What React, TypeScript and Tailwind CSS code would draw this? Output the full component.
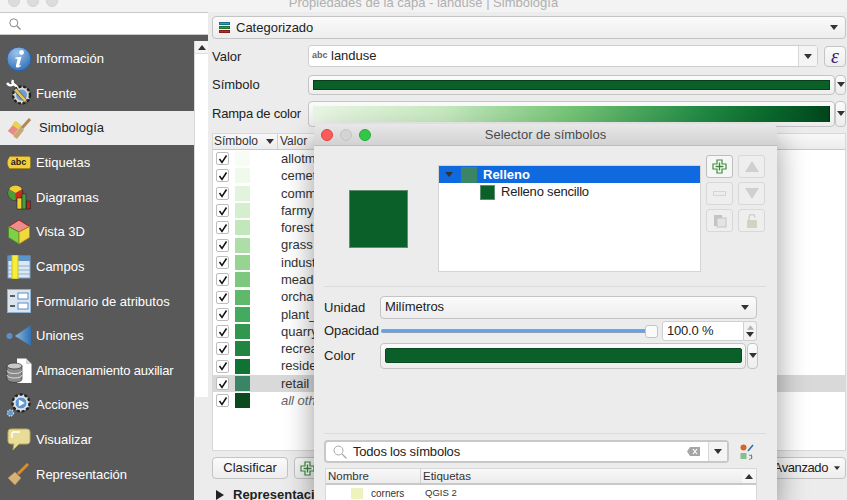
import React from "react";

const Caret = ({ className = "" }: { className?: string }) => (
  <svg width="8" height="5" viewBox="0 0 8 5" className={className}><path d="M0 0h8L4 5z" fill="#333" /></svg>
);

const Light = ({ color, border }: { color: string; border: string }) => (
  <span className="block w-[12px] h-[12px] rounded-full border" style={{ backgroundColor: color, borderColor: border }} />
);

const IconInfo = () => (
  <svg width="26" height="26" viewBox="0 0 26 26">
    <defs><radialGradient id="ig" cx="40%" cy="25%" r="80%"><stop offset="0" stopColor="#9cc3ec" /><stop offset="1" stopColor="#2f6db5" /></radialGradient></defs>
    <circle cx="13" cy="13" r="12" fill="url(#ig)" stroke="#2a5f9e" />
    <circle cx="15.5" cy="6.5" r="2.4" fill="#fff" />
    <path d="M9.5 11.5l6-.8-2.4 9 1.8-.6-.3 1.4c-3 1.6-5.2 1.3-4.6-1l1.6-6.7-2.3.2z" fill="#fff" />
  </svg>
);
const IconFuente = () => (
  <svg width="26" height="28" viewBox="0 0 26 28">
    <path d="M1 4c2 3 5 3 6 1M7 1c-1 2 0 4 2 5l4 4" stroke="#fff" strokeWidth="2.4" fill="none" />
    <circle cx="15.5" cy="16" r="8.5" fill="#d8d8d8" stroke="#222" strokeWidth="2.4" strokeDasharray="3 1.6" />
    <circle cx="15.5" cy="16" r="5.5" fill="#6f9ecb" />
    <path d="M10 9l11 12-2.5 2.2L8 11.5z" fill="#e9c65a" stroke="#444" strokeWidth=".7" />
  </svg>
);
const IconSimbologia = () => (
  <svg width="26" height="24" viewBox="0 0 26 24">
    <path d="M2 15L10 5l7 6-8 9z" fill="#d9c08c" />
    <path d="M2 15l5-6 5 4-5 6z" fill="#e78a88" />
    <path d="M6 9l3-4 6 4-3 4z" fill="#e9d44f" />
    <path d="M7 20l8-9 3 3-7 9z" fill="#c9a878" />
    <path d="M16 12l8-9" stroke="#b08a54" strokeWidth="3" />
  </svg>
);
const IconAbc = () => (
  <div className="relative w-[24px] h-[13px] bg-[#f2cf3a] border border-[#a98a14] rounded-r-[2px] flex items-center justify-center text-[9px] leading-none font-bold text-[#222]" style={{ clipPath: "polygon(14% 0, 100% 0, 100% 100%, 14% 100%, 0 50%)" }}>
    abc
  </div>
);
const IconDiagramas = () => (
  <svg width="24" height="26" viewBox="0 0 24 26">
    <circle cx="8.5" cy="9" r="7.5" fill="#cc2a20" stroke="#222" strokeWidth=".7" />
    <path d="M8.5 9L2 5.2A7.5 7.5 0 0 1 15 5.2z" fill="#f1cf2f" />
    <path d="M8.5 9v7.5A7.5 7.5 0 0 1 1 9c0-1.400.4-2.700 1-3.800z" fill="#4a9e3a" />
    <rect x="10" y="14" width="5" height="11" fill="#f1cf2f" stroke="#222" strokeWidth=".6" />
    <rect x="15" y="10" width="4" height="15" fill="#4a9e3a" stroke="#222" strokeWidth=".6" />
    <rect x="19.500" y="17" width="4" height="8" fill="#b5261c" stroke="#222" strokeWidth=".6" />
  </svg>
);
const IconCube = () => (
  <svg width="24" height="26" viewBox="0 0 24 26">
    <path d="M12 1l10.500 6.500L12 13 1.500 7.500z" fill="#f08b8b" stroke="#a81f1f" />
    <path d="M1.500 7.500L12 13v12L1.500 18.500z" fill="#7fcf4a" stroke="#4d8a2a" />
    <path d="M22.500 7.500L12 13v12l10.500-6.500z" fill="#f1d83f" stroke="#a38f1c" />
  </svg>
);
const IconCampos = () => (
  <svg width="24" height="24" viewBox="0 0 24 24">
    <rect x="1" y="1" width="22" height="22" fill="#dbe7f3" stroke="#7aa3cb" />
    <rect x="1" y="1" width="22" height="5" fill="#5b93cb" />
    <path d="M1 11h22M1 15h22M1 19h22M8 6v17" stroke="#8db0d3" />
    <rect x="5" y="0" width="6" height="24" fill="#f5ee3e" stroke="#c9bf22" />
  </svg>
);
const IconForm = () => (
  <svg width="24" height="24" viewBox="0 0 24 24">
    <rect x=".5" y=".5" width="23" height="23" fill="#dbe5ef" stroke="#8fb0d0" />
    <rect x="11" y="4" width="10" height="6" fill="#fff" stroke="#5b8fc4" />
    <rect x="11" y="14" width="10" height="6" fill="#fff" stroke="#5b8fc4" />
    <path d="M3 7h5M3 17h5" stroke="#333" strokeWidth="1.500" />
  </svg>
);
const IconUniones = () => (
  <svg width="26" height="24" viewBox="0 0 26 24">
    <circle cx="3.500" cy="12" r="3" fill="#5b8fc9" />
    <defs><linearGradient id="ug" x1="0" x2="1"><stop offset="0" stopColor="#8db6de" /><stop offset="1" stopColor="#2f70b0" /></linearGradient></defs>
    <path d="M9 12L25 1v21z" fill="url(#ug)" />
  </svg>
);
const IconStorage = () => (
  <svg width="26" height="26" viewBox="0 0 26 26">
    <path d="M11 .5h9l5.500 5.500v19H11z" fill="#fff" />
    <path d="M20 .5v5.500h5.500" fill="#d5d5d5" />
    <path d="M1 8v13c0 4.500 15 4.500 15 0V8z" fill="#8a8a8a" stroke="#333" strokeWidth=".7" />
    <ellipse cx="8.500" cy="8" rx="7.500" ry="3" fill="#c8c8c8" stroke="#333" strokeWidth=".7" />
    <path d="M1 12.500c0 4 15 4 15 0M1 17c0 4 15 4 15 0" stroke="#ddd" fill="none" />
  </svg>
);
const IconAcciones = () => (
  <svg width="26" height="26" viewBox="0 0 26 26">
    <circle cx="15" cy="11" r="8.500" fill="#e2e2e2" stroke="#222" strokeWidth="2.400" strokeDasharray="3 1.800" />
    <circle cx="15" cy="11" r="6" fill="#5c97d3" stroke="#dce9f5" />
    <path d="M12.800 7.500l6 3.500-6 3.500z" fill="#fff" />
    <circle cx="4.500" cy="21" r="3" fill="#5c97d3" stroke="#ccc" strokeWidth="1.400" strokeDasharray="1.500 1" />
  </svg>
);
const IconVisualizar = () => (
  <svg width="24" height="24" viewBox="0 0 24 24">
    <path d="M4 1h16a3 3 0 0 1 3 3v9a3 3 0 0 1-3 3H12l-6 6 1-6H4a3 3 0 0 1-3-3V4a3 3 0 0 1 3-3z" fill="#e8dc96" stroke="#b9ab5c" />
    <path d="M5 10V6a2 2 0 0 1 2-2h6" stroke="#fff" strokeWidth="1.400" fill="none" />
  </svg>
);
const IconRepresentacion = () => (
  <svg width="24" height="24" viewBox="0 0 24 24">
    <path d="M1 15l7-6 6 6-6 7z" fill="#d5b27a" stroke="#a88652" strokeWidth=".6" />
    <path d="M11 11L21 1" stroke="#d98d22" strokeWidth="3" />
  </svg>
);

const navItems: { label: string; icon: React.ReactNode; selected?: boolean; tight?: boolean }[] = [
  { label: "Información", icon: <IconInfo /> },
  { label: "Fuente", icon: <IconFuente /> },
  { label: "Simbología", icon: <IconSimbologia />, selected: true },
  { label: "Etiquetas", icon: <IconAbc /> },
  { label: "Diagramas", icon: <IconDiagramas /> },
  { label: "Vista 3D", icon: <IconCube /> },
  { label: "Campos", icon: <IconCampos /> },
  { label: "Formulario de atributos", icon: <IconForm /> },
  { label: "Uniones", icon: <IconUniones /> },
  { label: "Almacenamiento auxiliar", icon: <IconStorage />, tight: true },
  { label: "Acciones", icon: <IconAcciones /> },
  { label: "Visualizar", icon: <IconVisualizar /> },
  { label: "Representación", icon: <IconRepresentacion /> },
];

const rows: { name: string; color: string; selected?: boolean; italic?: boolean }[] = [
  { name: "allotments", color: "#f7fcf5" },
  { name: "cemetery", color: "#eff9ec" },
  { name: "commercial", color: "#e3f4de" },
  { name: "farmyard", color: "#d4eece" },
  { name: "forest", color: "#c2e7bb" },
  { name: "grass", color: "#addea7" },
  { name: "industrial", color: "#96d492" },
  { name: "meadow", color: "#7dc87e" },
  { name: "orchard", color: "#5eb96b" },
  { name: "plant_nursery", color: "#42ab5d" },
  { name: "quarry", color: "#31964f" },
  { name: "recreation_ground", color: "#208541" },
  { name: "residential", color: "#0f7433" },
  { name: "retail", color: "#3a8566", selected: true },
  { name: "all other values", color: "#0b4a1f", italic: true },
];

const btn = "border border-[#c4c4c4] rounded-[4px] bg-gradient-to-b from-[#fbfbfb] to-[#ededed]";

const SmallBtn = ({ children, active }: { children: React.ReactNode; active?: boolean }) => (
  <div className={`w-[27px] h-[23px] rounded-[3px] border flex items-center justify-center ${active ? "border-[#bdbdbd] bg-[#f6f6f6]" : "border-[#d8d8d8] bg-[#eeeeee]"}`}>{children}</div>
);

const Plus = () => (
  <svg width="15" height="15" viewBox="0 0 15 15">
    <path d="M5 1h5v4h4v5h-4v4H5v-4H1V5h4z" fill="#fff" stroke="#3d8a3d" strokeWidth="1.200" />
    <path d="M7.500 3.500v8M3.500 7.500h8" stroke="#3d8a3d" strokeWidth="1.400" />
  </svg>
);

function Dialog() {
  return (
    <div className="absolute left-[314px] top-[124px] w-[463px] h-[376px] bg-[#ececec] rounded-t-[6px] shadow-[0_14px_30px_rgba(0,0,0,0.4)] text-[13px] text-[#222]">
      <div className="relative h-[22px] rounded-t-[6px] bg-gradient-to-b from-[#e8e8e8] to-[#d2d2d2] border-b border-[#bdbdbd] flex items-center justify-center text-[#4a4a4a]">
        <div className="absolute left-[7px] top-[5px] flex gap-[7px]">
          <Light color="#fc5b57" border="#e0443e" />
          <Light color="#d4d4d4" border="#c4c4c4" />
          <Light color="#33c748" border="#27a83a" />
        </div>
        <span>Selector de símbolos</span>
      </div>

      <div className="flex h-[126px] pt-[19px]">
        <div className="w-[124px] shrink-0 flex justify-end pt-[25px] pr-[30px]">
          <div className="w-[59px] h-[58px] bg-[#0b5f28] border border-[#5d8f6f]" />
        </div>
        <div className="w-[263px] h-[107px] bg-white border border-[#d4d4d4]">
          <div className="h-[17px] bg-[#0f6ae0] flex items-center text-white font-bold">
            <Caret className="ml-[6px]" />
            <div className="w-[16px] h-[16px] bg-[#3a8566] ml-[8px]" />
            <span className="ml-[6px] leading-none -mt-[1px]">Relleno</span>
          </div>
          <div className="flex items-center h-[18px] pl-[41px]">
            <div className="w-[15px] h-[15px] bg-[#0b5f28] border border-[#5d8f6f]" />
            <span className="ml-[6px] text-[#222] tracking-[-0.2px]">Relleno sencillo</span>
          </div>
        </div>
        <div className="ml-[5px] grid grid-cols-[27px_27px] gap-x-[5px] gap-y-[4px] h-fit -mt-[10px]">
          <SmallBtn active><Plus /></SmallBtn>
          <SmallBtn><svg width="14" height="11" viewBox="0 0 14 11"><path d="M7 0l7 11H0z" fill="#cfcfcf" /></svg></SmallBtn>
          <SmallBtn><div className="w-[13px] h-[5px] border border-[#e0d0d0] bg-[#f0eaea]" /></SmallBtn>
          <SmallBtn><svg width="14" height="11" viewBox="0 0 14 11"><path d="M0 0h14L7 11z" fill="#cfcfcf" /></svg></SmallBtn>
          <SmallBtn><svg width="14" height="14" viewBox="0 0 14 14"><path d="M1 1h8v3H4v8H1z" fill="#c4c4c4" /><rect x="4" y="4" width="9" height="9" fill="#e4e4e4" stroke="#c4c4c4" /></svg></SmallBtn>
          <SmallBtn><svg width="12" height="14" viewBox="0 0 12 14"><path d="M3 6V3.500a3 3 0 0 1 6 0" stroke="#d0d0d0" strokeWidth="1.500" fill="none" /><rect x="1" y="6" width="10" height="8" rx="1" fill="#d4d0c2" /></svg></SmallBtn>
        </div>
      </div>

      <div className="mx-[10px] mt-[14px] w-[442px] h-[1px] bg-[#dcdcdc]" />

      <div className="mt-[8px] pl-[10px] flex items-center h-[24px]">
        <span className="w-[56px] pt-[1px]">Unidad</span>
        <div className={`${btn} w-[377px] h-[23px] flex items-center justify-between pl-[4px] pr-[7px]`}>
          <span className="tracking-[-0.1px]">Milímetros</span>
          <Caret />
        </div>
      </div>

      <div className="mt-[2px] pl-[10px] flex items-center h-[20px]">
        <span className="w-[56px] shrink-0 whitespace-nowrap tracking-[-0.1px]">Opacidad</span>
        <div className="relative w-[277px] h-[13px] flex items-center ml-[1px]">
          <div className="w-[268px] h-[4px] rounded-full bg-[#5fa2ee] border-y border-[#8f9fb0]" />
          <div className="absolute left-[264px] top-0 w-[13px] h-[13px] rounded-[3px] bg-[#fafafa] border border-[#c4c4c4]" />
        </div>
        <div className="ml-[4px] w-[82px] h-[20px] bg-white border border-[#d0d0d0] rounded-l-[3px] pl-[4px] flex items-center tracking-[-0.2px]">100.0 %</div>
        <div className="w-[13px] h-[20px] border border-l-0 border-[#d0d0d0] rounded-r-[3px] bg-[#f4f4f4] flex flex-col items-center justify-center gap-[2px]">
          <svg width="7" height="5" viewBox="0 0 8 5"><path d="M0 5h8L4 0z" fill="#b5b5b5" /></svg>
          <Caret />
        </div>
      </div>

      <div className="mt-[1px] pl-[10px] flex items-center h-[27px]">
        <span className="w-[56px]">Color</span>
        <div className={`${btn} w-[366px] h-[26px] flex items-center pl-[4px] pr-[3px]`}>
          <div className="w-full h-[15px] bg-[#0b5f28] border border-[#0a4a20] rounded-[2px]" />
        </div>
        <div className={`${btn} ml-[1px] w-[11px] h-[26px] flex items-center justify-center`}>
          <Caret />
        </div>
      </div>

      <div className="mt-[64px] mx-[10px] w-[442px] h-[1px] bg-[#dcdcdc]" />

      <div className="mt-[6px] pl-[10px] flex items-center">
        <div className="w-[405px] h-[23px] bg-white border-2 border-[#c8c8c8] rounded-[4px] flex items-center">
          <svg width="14" height="14" viewBox="0 0 14 14" className="ml-[7px]"><circle cx="5.500" cy="5.500" r="4.500" fill="none" stroke="#a8a8a8" /><path d="M9 9l4.500 4.500" stroke="#a8a8a8" strokeWidth="1.200" /></svg>
          <span className="ml-[6px] text-[#222] grow tracking-[-0.2px]">Todos los símbolos</span>
          <svg width="13" height="9" viewBox="0 0 13 9" className="mr-[8px]"><path d="M3 0h10v9H3L0 4.500z" fill="#a5a5a5" /><path d="M6 2l4 5M10 2L6 7" stroke="#fff" strokeWidth="1.200" /></svg>
          <div className="w-[19px] h-full bg-[#f4f4f4] border-l border-[#d8d8d8] flex items-center justify-center"><Caret /></div>
        </div>
        <svg width="14" height="16" viewBox="0 0 14 16" className="ml-[11px]">
          <circle cx="3.500" cy="3.500" r="3" fill="#d9642a" />
          <path d="M8 7l5-6" stroke="#2f6fb0" strokeWidth="1.600" />
          <rect x="0.500" y="9" width="6" height="6" fill="#83c08e" />
          <path d="M9 11.500a2 2 0 1 1 0 3.500M11.500 10.500v4.500" stroke="#777" fill="none" strokeWidth=".9" />
        </svg>
      </div>

      <div className="mt-[5px] ml-[11px] w-[432px] h-[40px] bg-white border border-[#d8d8d8] flex flex-col">
        <div className="h-[16px] flex shrink-0 bg-gradient-to-b from-[#f8f8f8] to-[#ececec] border-b-2 border-[#c8c8c8] text-[11.5px] leading-[14px] text-[#333]">
          <div className="w-[95px] pl-[2px] border-r border-[#d0d0d0]">Nombre</div>
          <div className="grow pl-[2px]">Etiquetas</div>
          <div className="w-[14px] bg-[#f6f6f6] flex items-center justify-center"><svg width="8" height="5" viewBox="0 0 8 5"><path d="M0 5h8L4 0z" fill="#333" /></svg></div>
        </div>
        <div className="flex items-center h-[16px] text-[#333]">
          <div className="ml-[25px] w-[12px] h-[11px] bg-[#eef2bf]" />
          <span className="ml-[8px] w-[54px] text-[10px]">corners</span>
          <span className="text-[9.5px]">QGIS 2</span>
        </div>
      </div>
    </div>
  );
}

export default function App() {
  return (
    <div className="relative w-[847px] h-[500px] overflow-hidden bg-[#ececec] text-[13px] text-[#222] flex flex-col" style={{ fontFamily: '"Liberation Sans", Arial, sans-serif' }}>
      <div className="relative h-[12px] shrink-0 overflow-hidden bg-[#f3f3f3] flex justify-center text-[#b0b0b0] leading-none">
        <div className="absolute left-[8px] -top-[5px] flex gap-[7px]">
          <Light color="#dcdcdc" border="#d4d4d4" />
          <Light color="#dcdcdc" border="#d4d4d4" />
          <Light color="#dcdcdc" border="#d4d4d4" />
        </div>
        <span className="-mt-[4px]">Propiedades de la capa - landuse | Simbología</span>
      </div>

      <div className="flex grow min-h-0">
        <div className="w-[208px] shrink-0 flex flex-col">
          <div className="h-[23px] bg-white border-y border-[#c8c8c8] flex items-center pl-[9px] shrink-0">
            <svg width="12" height="12" viewBox="0 0 12 12"><circle cx="4.800" cy="4.800" r="4" fill="none" stroke="#888" /><path d="M8 8l3.500 3.500" stroke="#888" strokeWidth="1.200" /></svg>
          </div>
          <div className="flex grow min-h-0 relative">
            <div className="w-[194px] shrink-0 bg-[#595959] pt-[6.5px] text-white overflow-hidden">
              {navItems.map((n) => (
                <div key={n.label} className={`h-[34.65px] flex items-center ${n.selected ? "bg-[#ececec] text-[#222]" : ""}`}>
                  <div className="w-[36px] shrink-0 flex items-center justify-center pl-[1px]">{n.icon}</div>
                  <span className={`whitespace-nowrap ${n.selected ? "ml-[3px]" : ""} ${n.tight ? "tracking-[-0.18px]" : ""}`}>{n.label}</span>
                </div>
              ))}
            </div>
            <div className="w-[14px] shrink-0 flex flex-col">
              <div className="h-[6px] bg-[#595959]" />
              <div className="h-[356px] bg-white border-l border-[#d8d8d8] flex flex-col">
                <div className="h-[13px] bg-[#f4f4f4] flex items-center justify-center border-b border-[#e0e0e0]">
                  <svg width="8" height="5" viewBox="0 0 8 5"><path d="M0 5h8L4 0z" fill="#333" /></svg>
                </div>
              </div>
            </div>
          </div>
        </div>

        <div className="w-[4px] shrink-0" />

        <div className="w-[634px] shrink-0 flex flex-col pt-[4px]">
          <div className={`${btn} h-[23px] flex items-center justify-between pl-[6px] pr-[7px] shrink-0`}>
            <div className="flex items-center gap-[6px]">
              <div className="flex flex-col gap-[1px]">
                <div className="w-[11px] h-[3px] bg-[#2b9cc4] border-[0.5px] border-[#1a6f8e]" />
                <div className="w-[11px] h-[3px] bg-[#2b9a4a] border-[0.5px] border-[#1a6f33]" />
                <div className="w-[11px] h-[3px] bg-[#c02a20] border-[0.5px] border-[#8a1a14]" />
              </div>
              <span>Categorizado</span>
            </div>
            <Caret />
          </div>

          <div className="flex items-center h-[22px] mt-[6px] shrink-0">
            <span className="w-[96px] pt-[1px]">Valor</span>
            <div className="w-[510px] h-[22px] bg-white border border-[#cfcfcf] rounded-[3px] flex items-center">
              <span className="ml-[3px] text-[9px] font-bold text-[#666] w-[19px]">abc</span>
              <span className="grow">landuse</span>
              <div className="w-[19px] h-full bg-[#f4f4f4] border-l border-[#d8d8d8] flex items-center justify-center"><Caret /></div>
            </div>
            <div className={`${btn} ml-[6px] w-[22px] h-[21px] flex items-center justify-center text-[20px] leading-none italic text-[#3b1f6b]`} style={{ fontFamily: '"Liberation Serif", serif' }}>ε</div>
          </div>

          <div className="flex items-center h-[21px] mt-[7px] shrink-0">
            <span className="w-[96px]">Símbolo</span>
            <div className={`${btn} w-[527px] h-[20px] flex items-center px-[4px]`}>
              <div className="w-full h-[10px] bg-[#0b5f28] border border-[#06401a]" />
            </div>
            <div className={`${btn} w-[11px] h-[20px] flex items-center justify-center`}><Caret /></div>
          </div>

          <div className="flex items-center h-[27px] mt-[5px] shrink-0">
            <span className="w-[96px] pt-[1px] tracking-[-0.2px]">Rampa de color</span>
            <div className={`${btn} w-[527px] h-[26px] flex items-center px-[4px]`}>
              <div className="w-full h-[16px] bg-[linear-gradient(90deg,#e8f5e3_0%,#c7e9c0_25%,#74c476_50%,#238b45_75%,#0b6a2e_88%,#00441b_100%)] border-r border-[#0a2a12]" />
            </div>
            <div className={`${btn} w-[11px] h-[26px] flex items-center justify-center`}><Caret /></div>
          </div>

          <div className="h-[318px] mt-[6px] bg-white border border-[#d8d8d8] flex flex-col shrink-0">
            <div className="h-[16px] shrink-0 flex bg-gradient-to-b from-[#f8f8f8] to-[#ececec] border-b border-[#c8c8c8] text-[12px] leading-[15px] text-[#333]">
              <div className="w-[65px] pl-[1px] border-r border-[#d0d0d0] flex items-center justify-between pr-[3px]"><span>Símbolo</span><Caret /></div>
              <div className="grow pl-[2px]">Valor</div>
            </div>
            {rows.map((r) => (
              <div key={r.name} className={`h-[17.3px] flex items-center shrink-0 ${r.selected ? "bg-[#d9d9d9]" : ""}`}>
                <div className="ml-[3px] w-[13px] h-[13px] bg-white border border-[#bdbdbd] rounded-[2px] flex items-center justify-center">
                  <svg width="10" height="10" viewBox="0 0 10 10"><path d="M1.500 5l2.500 3.500L8.500 1.500" stroke="#111" strokeWidth="1.500" fill="none" /></svg>
                </div>
                <div className="ml-[6px] w-[15px] h-[15px]" style={{ backgroundColor: r.color }} />
                <span className={`ml-[31px] whitespace-nowrap text-[#333] ${r.italic ? "italic text-[#666]" : ""}`}>{r.name}</span>
              </div>
            ))}
          </div>

          <div className="flex items-center justify-between h-[22px] mt-[6px] shrink-0">
            <div className="flex items-center gap-[6px]">
              <div className={`${btn} w-[76px] h-[22px] flex items-center justify-center`}>Clasificar</div>
              <div className={`${btn} w-[27px] h-[22px] flex items-center justify-center`}><Plus /></div>
            </div>
            <div className={`${btn} w-[76px] h-[22px] flex items-center justify-end pr-[5px] gap-[6px]`}>
              <span className="tracking-[-0.4px]">Avanzado</span>
              <svg width="6" height="4" viewBox="0 0 8 5"><path d="M0 0h8L4 5z" fill="#333" /></svg>
            </div>
          </div>

          <div className="flex items-center h-[16px] mt-[8px] pl-[4px] font-bold shrink-0">
            <svg width="8" height="10" viewBox="0 0 8 10"><path d="M0 0l8 5-8 5z" fill="#222" /></svg>
            <span className="ml-[9px] whitespace-nowrap">Representación de capas</span>
          </div>
        </div>
      </div>

      <Dialog />
    </div>
  );
}
